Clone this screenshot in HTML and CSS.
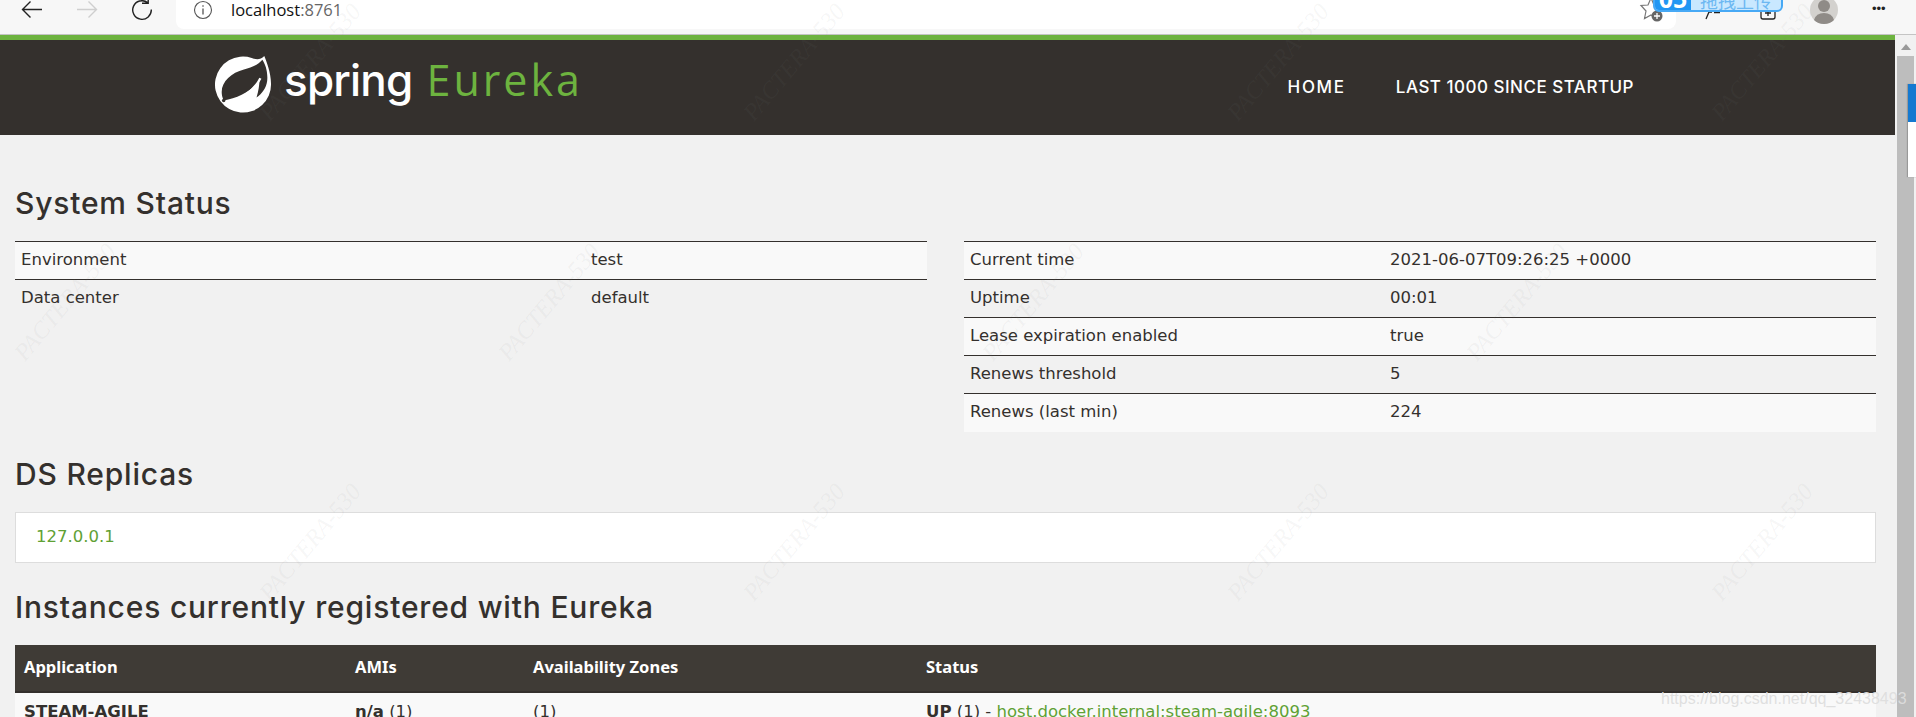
FILE: index.html
```html
<!DOCTYPE html>
<html lang="en">
<head>
<meta charset="utf-8">
<title>Eureka</title>
<link rel="stylesheet" href="styles.css">
</head>
<body>
<div class="window">
  <div class="toolbar">
    <div class="nav-btns">
      <svg class="tb-icon" viewBox="0 0 24 20"><path d="M22 9.500H2.500M10.500 1.500 2.500 9.500l8 8" fill="none" stroke="#222" stroke-width="1.400"/></svg>
      <svg class="tb-icon" viewBox="0 0 24 20"><path d="M2 9.500h19.500M13.500 1.500l8 8-8 8" fill="none" stroke="#cfcfcf" stroke-width="1.400"/></svg>
      <svg class="tb-icon" viewBox="0 0 24 20"><path d="M17.500 2.500A9.300 9.300 0 1 0 21.300 9.500M18.200 -3v6.200h-6.200" fill="none" stroke="#222" stroke-width="1.400"/></svg>
    </div>
    <div class="address">
      <svg class="info" viewBox="0 0 20 20"><circle cx="10" cy="10" r="8.500" fill="none" stroke="#555" stroke-width="1.100"/><path d="M10 8.500v6M10 5.200v1.600" stroke="#555" stroke-width="1.300"/></svg>
      <span class="url">localhost<span class="port">:8761</span></span>
      <svg class="fav" viewBox="0 0 28 24"><path d="M14 -2 17 5 24 5.500 19 11 20.500 18.500 14 15 7.500 18.500 9 11 4 5.500 11 5Z" fill="none" stroke="#777" stroke-width="1.200"/><circle cx="20" cy="16" r="5.500" fill="#666"/><path d="M17 16h6M20 13v6" stroke="#fff" stroke-width="1.300"/></svg>
    </div>
    <div class="tb-right">
      <svg class="ext-a" viewBox="0 0 20 10"><path d="M1 9 4 2h3M9 2.500h6" fill="none" stroke="#222" stroke-width="1.300"/></svg>
      <svg class="ext-b" viewBox="0 0 20 14"><path d="M3 2v8q0 2 2 2h10q2 0 2-2V2M10 3v6M7 6h6" fill="none" stroke="#222" stroke-width="1.300"/></svg>
      <svg class="avatar" viewBox="0 0 28 28"><circle cx="14" cy="14" r="14" fill="#d3d1ce"/><circle cx="14" cy="10" r="6" fill="#8f8b87"/><path d="M4 24q2-7 10-7t10 7q-4 4-10 4T4 24Z" fill="#8f8b87"/></svg>
      <span class="dots">•••</span>
    </div>
    <div class="badge"><span class="badge-num">05</span><span class="badge-text">拖拽上传</span></div>
  </div>
  <div class="viewport">
    <main class="page">
      <header class="site-head">
        <div class="brand">
          <svg class="leaf" viewBox="0 0 60 60">
            <path d="M52 1C54 6 59 18 59 30A29 29 0 1 1 39 3C44 5 48 5 52 1Z" fill="#fff"/>
            <path d="M10 47C3 32 15 19 31 15C39 13 46 10 50 5C53 9 56 18 55 27C54 34 50 40 44 44C46 37 47 31 47 26C41 36 25 45 10 47Z" fill="#34302d"/>
            <path d="M12 49C26 47 41 38 48 24" fill="none" stroke="#fff" stroke-width="2.400"/>
            <circle cx="10" cy="47" r="1.800" fill="#34302d"/>
          </svg>
          <span class="brand-spring">spring</span>
          <span class="brand-eureka">Eureka</span>
        </div>
        <nav class="site-nav">
          <a class="nav-link home">HOME</a>
          <a class="nav-link">LAST 1000 SINCE STARTUP</a>
        </nav>
      </header>
      <div class="content">
        <h2 class="title first">System Status</h2>
        <div class="status-grid">
          <table class="info-table left">
            <tr><td>Environment</td><td>test</td></tr>
            <tr><td>Data center</td><td>default</td></tr>
          </table>
          <table class="info-table right">
            <tr><td>Current time</td><td>2021-06-07T09:26:25 +0000</td></tr>
            <tr><td>Uptime</td><td>00:01</td></tr>
            <tr><td>Lease expiration enabled</td><td>true</td></tr>
            <tr><td>Renews threshold</td><td>5</td></tr>
            <tr><td>Renews (last min)</td><td>224</td></tr>
          </table>
        </div>
        <h2 class="title ds">DS Replicas</h2>
        <div class="well"><a class="link">127.0.0.1</a></div>
        <h2 class="title inst">Instances currently registered with Eureka</h2>
        <table class="instances">
          <thead>
            <tr><th class="c1">Application</th><th class="c2">AMIs</th><th class="c3">Availability Zones</th><th>Status</th></tr>
          </thead>
          <tbody>
            <tr><td><b>STEAM-AGILE</b></td><td><b>n/a</b> (1)</td><td>(1)</td><td><b>UP</b> (1) - <a class="link">host.docker.internal:steam-agile:8093</a></td></tr>
          </tbody>
        </table>
      </div>
    </main>
    <div class="scrollbar">
      <div class="sb-arrow"></div>
      <div class="sb-track"><div class="sb-panel"></div></div>
    </div>
  </div>
  <div class="watermarks" aria-hidden="true">
    <div class="wm-row odd"><span>PACTERA-530</span><span>PACTERA-530</span><span>PACTERA-530</span><span>PACTERA-530</span></div>
    <div class="wm-row even"><span>PACTERA-530</span><span>PACTERA-530</span><span>PACTERA-530</span><span>PACTERA-530</span></div>
    <div class="wm-row odd"><span>PACTERA-530</span><span>PACTERA-530</span><span>PACTERA-530</span><span>PACTERA-530</span></div>
  </div>
  <div class="csdn">https://blog.csdn.net/qq_32438493</div>
</div>
</body>
</html>
```
FILE: styles.css
```css
* { box-sizing: border-box; }
html, body { margin: 0; height: 100%; overflow: hidden; }
body { background: #f1f1f1; color: #34302d; font-family: "DejaVu Sans", "Noto Sans", sans-serif; font-size: 16.500px; }
.window { position: relative; height: 717px; width: 1916px; overflow: hidden; display: flex; flex-direction: column; }

.toolbar { height: 35px; flex: none; background: #f7f7f7; border-bottom: 1px solid #c4c4c4; display: flex; position: relative; }
.nav-btns { width: 176px; flex: none; display: flex; gap: 31px; padding-left: 20px; }
.tb-icon { width: 24px; height: 20px; overflow: visible; }
.address { width: 1500px; height: 29px; flex: none; background: #fff; border-radius: 0 0 8px 8px; display: flex; align-items: flex-start; position: relative; }
.info { width: 20px; height: 20px; margin: 0 0 0 17px; }
.url { margin-left: 18px; font-family: "Open Sans", sans-serif; font-size: 16.500px; line-height: 20px; color: #111; }
.port { color: #666; }
.fav { position: absolute; left: 1461px; top: 0; width: 28px; height: 24px; overflow: visible; }
.tb-right { flex: 1; position: relative; }
.ext-a { position: absolute; left: 29px; top: 10px; width: 20px; height: 10px; }
.ext-b { position: absolute; left: 82px; top: 7px; width: 20px; height: 14px; }
.avatar { position: absolute; left: 134px; top: -4px; width: 28px; height: 28px; }
.dots { position: absolute; left: 196px; top: -1px; font-size: 13px; line-height: 20px; letter-spacing: 0; color: #222; font-family: "Liberation Sans", sans-serif; }
.badge { position: absolute; left: 1653px; top: -19px; width: 130px; height: 31px; display: flex; border: 2px solid #47a9f5; border-radius: 6px; overflow: hidden; background: #c9e8ff; }
.badge-num { width: 36px; flex: none; background: #2196f3; color: #fff; font-family: "Noto Sans", sans-serif; font-weight: 700; font-size: 25px; line-height: 31px; text-align: center; }
.badge-text { flex: 1; color: #6db8f2; font-family: "Noto Sans CJK SC", sans-serif; font-size: 18px; line-height: 34px; text-align: center; }

.viewport { flex: 1; display: flex; min-height: 0; }
.page { width: 1895px; flex: none; }
.site-head { height: 100px; background: #34302d; border-top: 5px solid #6db33f; display: flex; justify-content: space-between; }
.brand { display: flex; align-items: flex-start; padding-left: 214px; }
.leaf { width: 58px; height: 58px; margin-top: 15px; flex: none; }
.brand-spring { margin-left: 12px; margin-top: 10px; font-family: "Inter", sans-serif; font-weight: 500; font-size: 44px; line-height: 60px; color: #fff; letter-spacing: -0.800px; }
.brand-eureka { margin-left: 14px; margin-top: 10px; font-family: "Open Sans", sans-serif; font-size: 43px; line-height: 60px; color: #6db33f; letter-spacing: 3px; }
.site-nav { display: flex; gap: 50px; padding: 33px 261px 0 0; }
.nav-link { font-family: "Inter", sans-serif; font-weight: 500; font-size: 17px; line-height: 28px; color: #fff; letter-spacing: .500px; }
.nav-link.home { letter-spacing: 1.700px; }

.content { padding: 0 19px 0 15px; }
.title { margin: 0; font-family: "Inter", sans-serif; font-weight: 500; font-size: 30px; line-height: 34px; color: #34302d; letter-spacing: .800px; }
.title.first { padding-top: 51px; }
.status-grid { display: flex; gap: 37px; margin-top: 21px; align-items: flex-start; }
.info-table { flex: 1; border-collapse: collapse; table-layout: fixed; }
.info-table td { height: 38px; padding: 0 6px 2px; border-top: 1px solid #34302d; line-height: 24px; }
.info-table tr:nth-child(odd) td { background: #f9f9f9; }
.info-table.left td:first-child { width: 570px; }
.info-table.right td:first-child { width: 420px; }
.title.ds { margin-top: 25px; }
.well { height: 51px; margin-top: 21px; padding: 12px 20px; background: #fff; border: 1px solid #ddd; line-height: 24px; }
.link { color: #5fa134; }
.title.inst { margin-top: 27px; }
.instances { width: 100%; margin-top: 21px; border-collapse: collapse; table-layout: fixed; }
.instances th { height: 47px; padding: 0 9px 3px; text-align: left; color: #fff; background: #3f3b36; border-bottom: 2px solid #34302d; font-family: "Noto Sans", sans-serif; font-size: 16.500px; font-weight: 700; }
.instances .c1 { width: 331px; }
.instances .c2 { width: 178px; }
.instances .c3 { width: 393px; }
.instances td { padding: 7px 9px; background: #f9f9f9; line-height: 24px; }

.scrollbar { flex: 1; padding: 21px 2px 0; position: relative; }
.sb-arrow { position: absolute; left: 6px; top: 9px; border: 6px solid transparent; border-top: 0; border-bottom: 6px solid #999; border-left-width: 5px; border-right-width: 5px; }
.sb-track { height: 100%; background: #bdbdbd; position: relative; }
.sb-panel { position: absolute; left: 11px; right: -3px; top: 28px; height: 93px; background: #fff; border-top: 38px solid #1579d0; box-shadow: -1px 0 1px #999; }

.watermarks { position: absolute; left: 0; top: -58px; width: 1916px; pointer-events: none; }
.wm-row { height: 240px; display: flex; }
.wm-row.odd { padding-left: 68px; }
.wm-row.even { margin-left: -177px; }
.wm-row span { width: 484px; flex: none; text-align: center; line-height: 240px; font-family: "Liberation Serif", serif; font-style: italic; font-size: 24px; color: rgba(130,130,130,.08); transform: rotate(-50deg); }
.csdn { position: absolute; left: 1661px; top: 690px; font-family: "Liberation Sans", sans-serif; font-size: 16px; line-height: 18px; color: rgba(222,222,222,.95); white-space: nowrap; }
```
